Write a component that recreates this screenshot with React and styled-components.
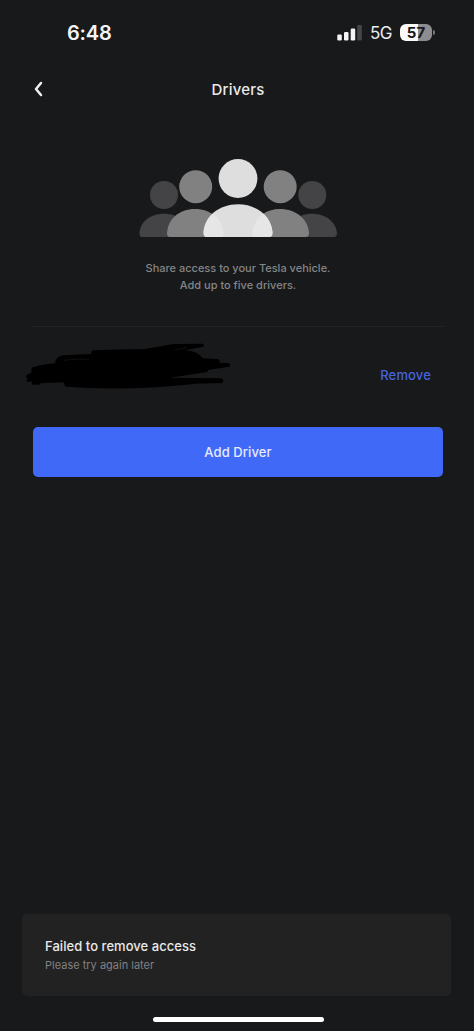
import React from "react";
import styled, { createGlobalStyle } from "styled-components";

const GlobalStyle = createGlobalStyle`
  * { box-sizing: border-box; }
  body { margin: 0; background: #18191b; }
`;

const Screen = styled.main`
  display: flex;
  flex-direction: column;
  width: 474px;
  height: 1031px;
  overflow: hidden;
  background: #18191b;
  color: #e9e9ea;
  font-family: Inter, "Liberation Sans", sans-serif;
`;

const StatusBar = styled.header`
  display: flex;
  align-items: center;
  justify-content: space-between;
  height: 65px;
  padding: 0 39px 0 67px;
`;

const Clock = styled.span`
  font-size: 20px;
  font-weight: 600;
  line-height: 24px;
  letter-spacing: -0.2px;
  color: #f4f4f5;
`;

const Indicators = styled.div`
  display: flex;
  align-items: center;
`;

const Network = styled.span`
  width: 38px;
  padding-left: 8px;
  font-size: 17px;
  line-height: 20px;
  letter-spacing: -0.5px;
  color: #ececed;
`;

const Battery = styled.div`
  display: flex;
  align-items: center;
  justify-content: center;
  width: 32px;
  height: 17px;
  border-radius: 6px;
  background: linear-gradient(90deg, #fafafa 57%, #8d8d8f 57%);
  color: #18191b;
  font-size: 15px;
  font-weight: 700;
  line-height: 17px;
`;

const BatteryTip = styled.i`
  width: 2px;
  height: 5px;
  margin-left: 1px;
  border-radius: 0 2px 2px 0;
  background: #77777a;
`;

const NavBar = styled.nav`
  display: grid;
  grid-template-columns: 44px 1fr 44px;
  align-items: center;
  height: 49px;
  padding: 0 15px 0 17px;
`;

const BackButton = styled.button`
  display: flex;
  justify-content: center;
  padding: 0;
  border: 0;
  background: none;
`;

const Title = styled.h1`
  margin: 0;
  font-size: 15px;
  font-weight: 500;
  line-height: 20px;
  letter-spacing: 0.2px;
  text-align: center;
`;

const Intro = styled.section`
  display: flex;
  flex-direction: column;
  align-items: center;
  height: 213px;
  margin: 0 31px 0 33px;
  padding-top: 45px;
  border-bottom: 1px solid #242527;
`;

const Hint = styled.p`
  margin: 23px 0 0;
  color: #858587;
  font-size: 11px;
  font-weight: 500;
  line-height: 17px;
  letter-spacing: 0;
  text-align: center;
`;

const DriverRow = styled.section`
  display: flex;
  justify-content: space-between;
  height: 100px;
  padding: 16px 43px 0 25px;
`;

const RemoveButton = styled.button`
  height: 20px;
  margin-top: 22px;
  padding: 0;
  border: 0;
  background: none;
  color: #4763dc;
  font: 500 13px/20px Inter, sans-serif;
  letter-spacing: 0.15px;
`;

const AddButton = styled.button`
  height: 50px;
  margin: 0 31px 0 33px;
  padding: 0;
  border: 0;
  border-radius: 5px;
  background: #4169f8;
  color: #e5ebfd;
  font: 500 13px/20px Inter, sans-serif;
  letter-spacing: 0.1px;
`;

const Toast = styled.aside`
  height: 82px;
  margin: auto 23px 21px 22px;
  padding: 22px 23px;
  border-radius: 5px;
  background: #222223;
`;

const ToastTitle = styled.div`
  font-size: 13px;
  font-weight: 500;
  line-height: 20px;
  letter-spacing: 0.05px;
`;

const ToastText = styled.div`
  color: #818182;
  font-size: 11px;
  line-height: 19px;
`;

const HomeIndicator = styled.div`
  flex: none;
  width: 171px;
  height: 5px;
  margin: 0 auto 9px 153px;
  border-radius: 3px;
  background: #fff;
`;

const Signal = () => (
  <svg width="25" height="16" viewBox="0 0 25 16" fill="#f4f4f5">
    <rect x="0.3" y="9.5" width="4.5" height="6" rx="1.2" />
    <rect x="7" y="7" width="4.5" height="8.5" rx="1.2" />
    <rect x="13.7" y="3.5" width="4.5" height="12" rx="1.2" />
    <rect x="20.3" y="0" width="4.5" height="15.5" rx="1.2" fill="#454648" />
  </svg>
);

const Chevron = () => (
  <svg width="12" height="18" viewBox="0 0 12 18" fill="none" stroke="#f0f0f1" strokeWidth="2.5" strokeLinecap="round" strokeLinejoin="round">
    <path d="M8 2 3 8l5 6" />
  </svg>
);

const People = () => (
  <svg width="198" height="78" viewBox="0 0 198 78">
    <g fill="#444446">
      <circle cx="25" cy="36" r="14" />
      <circle cx="173.3" cy="36" r="14" />
      <path d="M3 78Q.5 78 .5 74C1 63 11 54.7 25 54.7S50 63 50 78Z" />
      <path d="M195 78Q198 78 198 74C197 63 187 54.7 173 54.7S148 63 148 78Z" />
    </g>
    <g fill="#818182">
      <circle cx="56.7" cy="27.7" r="16.5" />
      <circle cx="141.2" cy="27.7" r="16.5" />
      <path d="M31 78Q28 78 28 74C29 60 40 50 56 50S83 60 84.5 74Q84.5 78 82 78Z" />
      <path d="M116 78Q113 78 113 74C114.5 60 125 50 141 50S169 60 170 74Q170 78 167 78Z" />
    </g>
    <circle cx="99" cy="19.5" r="19.4" fill="#dedede" />
    <path d="M68 78Q64.5 78 64.5 73.5C65.5 57.5 80 45.3 99 45.3S132.5 57.5 133.5 73.5Q133.5 78 130 78Z" fill="#dedede" />
    <path d="M68 78Q64.5 78 64.5 73.5C65 66 68.5 59 74 54.5C80 59 83.5 66 84.5 74Q84.5 78 82 78ZM130 78Q133.5 78 133.5 73.5C133 66 129.5 59 124 54.5C118 59 114.5 66 113 74Q113 78 116 78Z" fill="#e6e6e6" />
  </svg>
);

const Redaction = () => (
  <svg width="208" height="48" viewBox="30 84 624 144">
    <path d="M33 184Q35 178 49 174L50 158Q80 148 120 145Q122 124 145 121L230 117Q226 108 236 106Q310 103 390 102L475 87L563 86Q571 90 563 95L510 106Q548 108 563 130L608 132Q616 135 613 143L640 145Q650 150 643 155L579 165L577 171L465 188L618 190Q630 196 622 204L540 206Q460 215 390 218Q270 224 153 215Q146 212 148 202L76 205L73 209L52 209L50 199L38 201Q33 198 37 192Z" />
    <path d="M146 136Q190 131 221 133M479 105L516 98" fill="none" stroke="#101112" strokeWidth="3" />
  </svg>
);

export default function App() {
  return (
    <Screen>
      <GlobalStyle />
      <StatusBar>
        <Clock>6:48</Clock>
        <Indicators>
          <Signal />
          <Network>5G</Network>
          <Battery>57</Battery>
          <BatteryTip />
        </Indicators>
      </StatusBar>
      <NavBar>
        <BackButton aria-label="Back"><Chevron /></BackButton>
        <Title>Drivers</Title>
      </NavBar>
      <Intro>
        <People />
        <Hint>Share access to your Tesla vehicle.<br />Add up to five drivers.</Hint>
      </Intro>
      <DriverRow>
        <Redaction />
        <RemoveButton>Remove</RemoveButton>
      </DriverRow>
      <AddButton>Add Driver</AddButton>
      <Toast>
        <ToastTitle>Failed to remove access</ToastTitle>
        <ToastText>Please try again later</ToastText>
      </Toast>
      <HomeIndicator />
    </Screen>
  );
}
